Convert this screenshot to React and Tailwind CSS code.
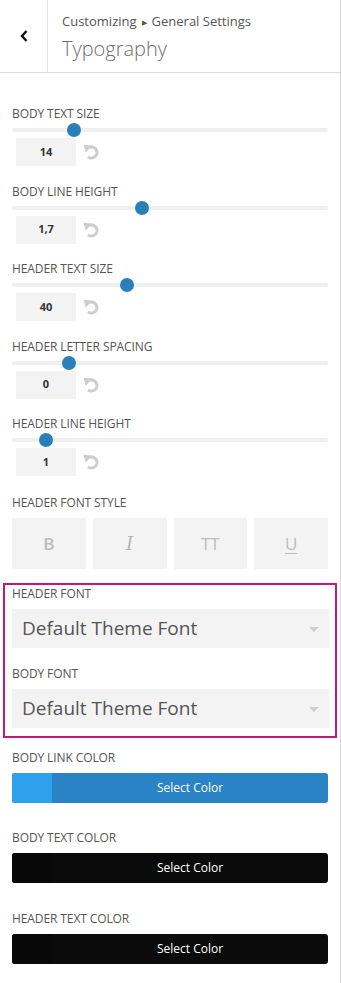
import React from "react";

const font = { fontFamily: '"Open Sans", "Noto Sans", sans-serif' };

const sliders = [
  { label: "Body Text Size", value: "14", pos: 62 },
  { label: "Body Line Height", value: "1,7", pos: 130 },
  { label: "Header Text Size", value: "40", pos: 115 },
  { label: "Header Letter Spacing", value: "0", pos: 57 },
  { label: "Header Line Height", value: "1", pos: 34 },
];

const ResetIcon = () => (
  <svg width="18" height="16" viewBox="0 0 18 16" className="text-[#cdcdcd]">
    <path
      d="M6.4 3.4 A5.5 5.5 0 1 1 5 12.8"
      fill="none"
      stroke="currentColor"
      strokeWidth="3"
    />
    <path d="M0.6 0.8 L9.4 1.6 L2.6 8.8 Z" fill="currentColor" />
  </svg>
);

const Label = ({ children }) => (
  <div className="h-[16px] leading-[16px] text-[12px] uppercase text-[#555] tracking-[-0.1px]">
    {children}
  </div>
);

const Slider = ({ label, value, pos, first }) => (
  <div className={first ? "" : "mt-[17.5px]"}>
    <Label>{label}</Label>
    <div className="relative mt-[6px] h-[4px] rounded-full bg-[#efefef]">
      <div
        className="absolute top-[-5px] h-[14px] w-[14px] rounded-full bg-[#2980b9]"
        style={{ left: pos - 7 }}
      />
    </div>
    <div className="mt-[6px] flex items-center">
      <div className="ml-[4px] flex h-[28px] w-[60px] items-center justify-center bg-[#f3f3f3] text-[11px] font-bold text-[#333]">
        {value}
      </div>
      <div className="ml-[7px] flex items-center">
        <ResetIcon />
      </div>
    </div>
  </div>
);

const FontSelect = () => (
  <div className="relative mt-[7px] flex h-[39px] items-center bg-[#f3f3f3] pl-[10px] text-[19px] text-[#555]">
    Default Theme Font
    <div className="absolute right-[10px] top-[18px] h-0 w-0 border-x-[5px] border-t-[5px] border-x-transparent border-t-[#cdcdcd]" />
  </div>
);

const ColorButton = ({ swatch, bg }) => (
  <div className={`mt-[7px] flex h-[30px] overflow-hidden rounded-[3px] ${bg}`}>
    <div className={`w-[40px] ${swatch}`} />
    <div className="flex flex-1 items-center justify-center text-[12px] text-white">
      Select Color
    </div>
  </div>
);

export default function App() {
  return (
    <div style={font} className="min-h-[983px] w-[341px] border-r border-[#d6d6d6] bg-white">
      {/* Header */}
      <div className="flex h-[73px] border-b border-[#dcdcdc]">
        <div className="flex w-[48px] items-center justify-center border-r border-[#e3e3e3]">
          <svg width="10" height="14" viewBox="0 0 10 14">
            <path d="M7.5 2 L3 7 L7.5 12" fill="none" stroke="#111" strokeWidth="2.4" />
          </svg>
        </div>
        <div className="pl-[14px] pt-[11px]">
          <div className="text-[13px] leading-[20px] text-[#555]">
            Customizing<span className="mx-[5px] text-[7px] align-middle">▶</span>General Settings
          </div>
          <div className="mt-[2px] text-[20px] font-light leading-[28px] text-[#6f6f6f]">
            Typography
          </div>
        </div>
      </div>

      <div className="px-[12px] pt-[33px]">
        {sliders.map((s, i) => (
          <Slider key={s.label} {...s} first={i === 0} />
        ))}

        {/* Font style */}
        <div className="mt-[19px]">
          <Label>Header Font Style</Label>
          <div className="mt-[7px] grid grid-cols-4 gap-[7px]">
            <div className="flex h-[51px] items-center justify-center bg-[#f3f3f3] text-[17px] font-semibold text-[#bdbdbd]">
              B
            </div>
            <div className="flex h-[51px] items-center justify-center bg-[#f3f3f3] text-[18px] italic text-[#b5b5b5]" style={{ fontFamily: '"DejaVu Serif", serif' }}>
              I
            </div>
            <div className="flex h-[51px] items-center justify-center bg-[#f3f3f3] text-[17px] text-[#bdbdbd]">
              TT
            </div>
            <div className="flex h-[51px] items-center justify-center bg-[#f3f3f3] text-[17px] text-[#bdbdbd] underline underline-offset-[3px]">
              U
            </div>
          </div>
        </div>
      </div>

      {/* Highlighted font selectors */}
      <div className="mx-[3px] mt-[14px] w-[334px] border-2 border-[#c2187a] pb-[8px] pl-[7px] pr-[6px] pt-[1px]">
        <Label>Header Font</Label>
        <FontSelect />
        <div className="mt-[18px]">
          <Label>Body Font</Label>
          <FontSelect />
        </div>
      </div>

      <div className="px-[12px] pt-[12px]">
        <Label>Body Link Color</Label>
        <ColorButton bg="bg-[#2a83c4]" swatch="bg-[#2ea1ec]" />
        <div className="mt-[27px]">
          <Label>Body Text Color</Label>
          <ColorButton bg="bg-[#0b0b0b]" swatch="bg-[#080808]" />
        </div>
        <div className="mt-[28px]">
          <Label>Header Text Color</Label>
          <ColorButton bg="bg-[#0b0b0b]" swatch="bg-[#080808]" />
        </div>
      </div>
    </div>
  );
}
